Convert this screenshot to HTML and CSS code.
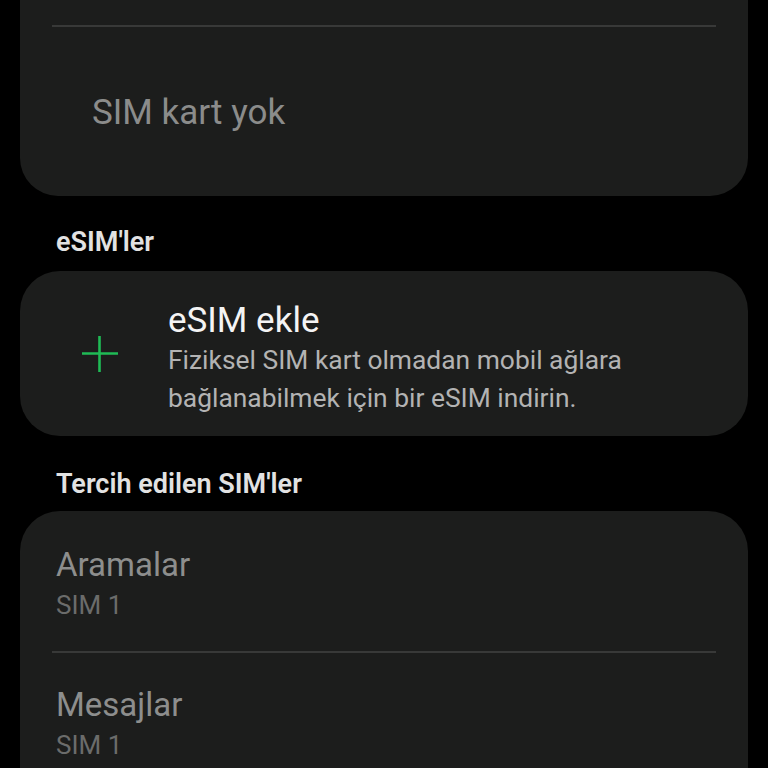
FILE: index.html
```
<!DOCTYPE html>
<html lang="tr">
<head>
<meta charset="utf-8">
<title>SIM kart yöneticisi</title>
<link rel="stylesheet" href="styles.css">
</head>
<body>
<main class="screen">
  <section class="card card-top">
    <div class="top-space"></div>
    <div class="divider"></div>
    <div class="empty-row">SIM kart yok</div>
  </section>

  <h2 class="section-title first">eSIM'ler</h2>
  <section class="card card-esim">
    <div class="plus-icon">
      <svg width="40" height="40" viewBox="0 0 40 40" aria-hidden="true">
        <path d="M2 19.5H38M19.5 2V38" stroke="#1fbb55" stroke-width="2.6" fill="none"/>
      </svg>
    </div>
    <div class="esim-text">
      <div class="esim-title">eSIM ekle</div>
      <div class="esim-desc">Fiziksel SIM kart olmadan mobil ağlara bağlanabilmek için bir eSIM indirin.</div>
    </div>
  </section>

  <h2 class="section-title second">Tercih edilen SIM'ler</h2>
  <section class="card card-pref">
    <div class="pref-row">
      <div class="pref-title">Aramalar</div>
      <div class="pref-sub">SIM 1</div>
    </div>
    <div class="divider"></div>
    <div class="pref-row last">
      <div class="pref-title">Mesajlar</div>
      <div class="pref-sub">SIM 1</div>
    </div>
  </section>
</main>
</body>
</html>
```
FILE: styles.css
```
html, body {
  margin: 0;
  padding: 0;
  background: #000;
}
body {
  font-family: Roboto, "Liberation Sans", sans-serif;
  width: 768px;
  height: 768px;
  overflow: hidden;
}
.screen {
  padding: 0 20px;
  display: flex;
  flex-direction: column;
}
.card {
  background: #1c1d1c;
  border-radius: 40px;
}
.card-top {
  height: 196px;
  border-radius: 0 0 38px 38px;
  display: flex;
  flex-direction: column;
}
.top-space {
  height: 25px;
}
.divider {
  height: 2px;
  background: #383938;
  margin: 0 32px;
}
.empty-row {
  flex: 1;
  display: flex;
  align-items: center;
  padding-left: 72px;
  font-size: 35px;
  color: #8b8c8b;
  padding-top: 2px;
}
.section-title {
  margin: 0;
  font-size: 27px;
  line-height: 30px;
  font-weight: 600;
  color: #e2e2e2;
  padding-left: 36px;
}
.section-title.first {
  padding-top: 31px;
  padding-bottom: 14px;
}
.section-title.second {
  padding-top: 33px;
  padding-bottom: 12px;
}
.card-esim {
  height: 165px;
  display: flex;
  align-items: center;
}
.plus-icon {
  width: 40px;
  height: 40px;
  margin-left: 60px;
  margin-right: 48px;
  display: flex;
}
.esim-text {
  padding-top: 30px;
  padding-bottom: 20px;
  align-self: stretch;
  box-sizing: border-box;
  width: 520px;
}
.esim-title {
  font-size: 35px;
  line-height: 40px;
  color: #f4f4f4;
}
.esim-desc {
  font-size: 26.4px;
  line-height: 38px;
  color: #b3b3b3;
}
.card-pref {
  height: 257px;
  border-radius: 40px 40px 0 0;
  overflow: hidden;
}
.pref-row {
  padding: 34px 36px 29px;
}
.pref-row.last {
  padding-top: 32px;
}
.pref-title {
  font-size: 33px;
  line-height: 40px;
  color: #8d8e8d;
}
.pref-sub {
  font-size: 26px;
  line-height: 34px;
  margin-top: 3px;
  color: #6b6c6b;
}
```
